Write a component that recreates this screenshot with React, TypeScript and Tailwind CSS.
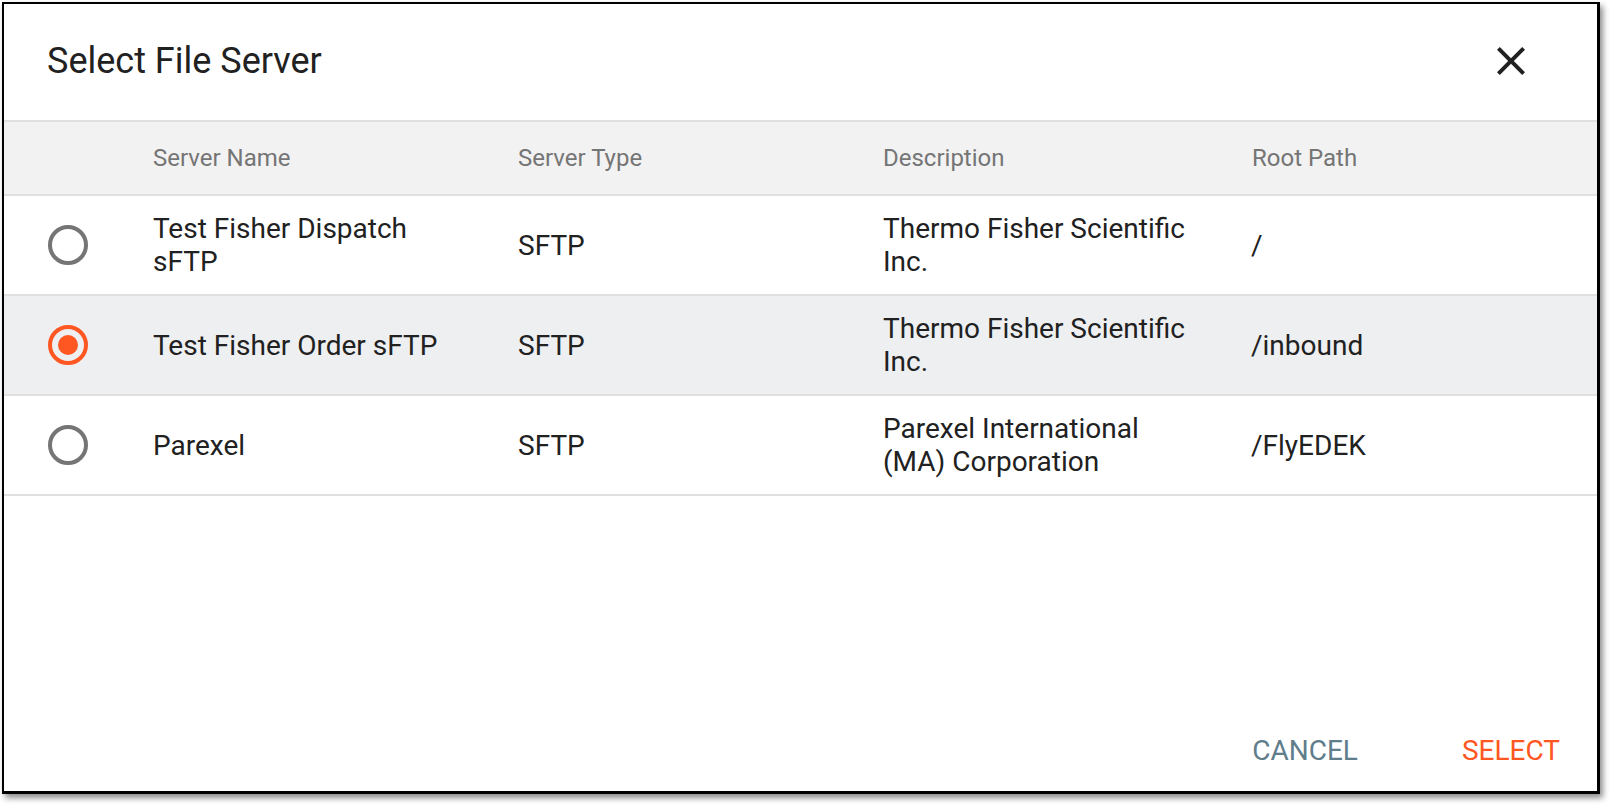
import { useState } from "react"

interface FileServer {
  id: string
  name: string
  type: string
  description: string
  rootPath: string
}

const servers: FileServer[] = [
  {
    id: "dispatch",
    name: "Test Fisher Dispatch sFTP",
    type: "SFTP",
    description: "Thermo Fisher Scientific Inc.",
    rootPath: "/",
  },
  {
    id: "order",
    name: "Test Fisher Order sFTP",
    type: "SFTP",
    description: "Thermo Fisher Scientific Inc.",
    rootPath: "/inbound",
  },
  {
    id: "parexel",
    name: "Parexel",
    type: "SFTP",
    description: "Parexel International (MA) Corporation",
    rootPath: "/FlyEDEK",
  },
]

const gridCols = "grid grid-cols-[149px_365px_365px_368px_1fr]"

function Radio({ checked }: { checked: boolean }) {
  return (
    <span
      className={`flex h-[40px] w-[40px] items-center justify-center rounded-full border-4 ${
        checked ? "border-[#ff5722]" : "border-[#757575]"
      }`}
    >
      {checked && <span className="h-[20px] w-[20px] rounded-full bg-[#ff5722]" />}
    </span>
  )
}

function CloseIcon() {
  return (
    <svg width="48" height="48" viewBox="0 0 24 24" fill="#212121">
      <path d="M19 6.41 17.59 5 12 10.59 6.41 5 5 6.41 10.59 12 5 17.59 6.41 19 12 13.41 17.59 19 19 17.59 13.41 12z" />
    </svg>
  )
}

export default function App() {
  const [selected, setSelected] = useState("order")

  return (
    <div className="h-[804px] w-[1610px] bg-white pl-[2px] pt-[2px] font-['Roboto',sans-serif]">
      <div className="flex h-[792px] w-[1598px] flex-col border-b-[3px] border-l-2 border-r-[3px] border-t-2 border-black bg-white shadow-[3px_4px_6px_rgba(0,0,0,0.45)]">
        {/* Title bar */}
        <div className="flex h-[116px] items-center justify-between pb-[2px] pl-[43px] pr-[62px]">
          <h1 className="text-[36px] font-normal leading-[44px] text-[#212121]">Select File Server</h1>
          <button type="button" className="flex h-[48px] w-[48px] items-center justify-center">
            <CloseIcon />
          </button>
        </div>

        {/* Table header */}
        <div className={`${gridCols} h-[76px] items-center border-y-2 border-[#e0e0e0] bg-[#f2f2f2] text-[24px] leading-[28px] text-[#757575]`}>
          <div />
          <div>Server Name</div>
          <div>Server Type</div>
          <div>Description</div>
          <div className="pl-[1px]">Root Path</div>
        </div>

        {/* Rows */}
        {servers.map((s) => {
          const isSelected = selected === s.id
          return (
            <div
              key={s.id}
              onClick={() => setSelected(s.id)}
              className={`${gridCols} h-[100px] cursor-pointer items-center border-b-2 border-[#e0e0e0] text-[28px] leading-[33px] text-[#212121] ${
                isSelected ? "bg-[#eeeff1]" : "bg-white"
              }`}
            >
              <div className="pl-[44px]">
                <Radio checked={isSelected} />
              </div>
              <div className="pr-[60px]">{s.name}</div>
              <div>{s.type}</div>
              <div className="pr-[56px]">{s.description}</div>
              <div>{s.rootPath}</div>
            </div>
          )
        })}

        <div className="flex-1" />

        {/* Actions */}
        <div className="flex justify-end gap-[72px] pb-[17px] pr-[21px]">
          <button type="button" className="h-[46px] px-[16px] text-[28px] leading-[46px] text-[#607d8b]">
            CANCEL
          </button>
          <button type="button" className="h-[46px] px-[16px] text-[28px] leading-[46px] text-[#ff5722]">
            SELECT
          </button>
        </div>
      </div>
    </div>
  )
}
